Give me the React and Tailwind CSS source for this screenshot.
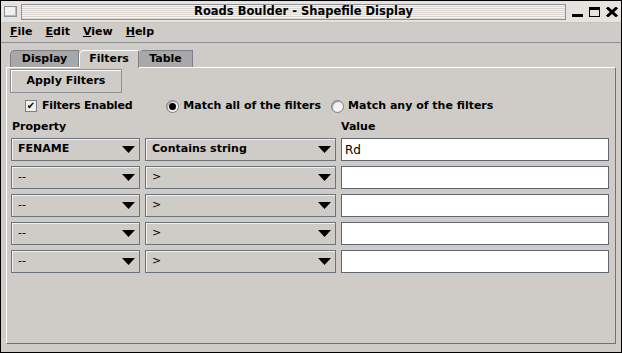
const font = "font-['DejaVu_Sans',sans-serif]";

function Combo({ label, bold, w }) {
  return (
    <div className={`${w} h-[23px] flex items-center justify-between border border-[#6b737d] shadow-[inset_1px_1px_0_#f2f1ee] bg-[#cfccc8] pl-[6px] pr-[4px]`}>
      <span className={`${bold ? "font-bold" : "font-normal"} text-[11px] text-black`}>{label}</span>
      <svg width="13" height="8" viewBox="0 0 13 8"><path d="M0 0 H13 L6.5 7 Z" fill="#000" /></svg>
    </div>
  );
}

function FilterRow({ prop, op, val, bold }) {
  return (
    <div className="flex gap-[5px]">
      <Combo label={prop} bold={bold} w="w-[129px]" />
      <Combo label={op} bold={bold} w="w-[191px]" />
      <div className="w-[268px] h-[23px] bg-white border border-[#5f6670] flex items-center px-[3px] text-[12px] text-black">
        {val}
      </div>
    </div>
  );
}

function Radio({ checked, label }) {
  return (
    <div className="flex items-center gap-[4px]">
      <div className="w-[13px] h-[13px] rounded-full border border-[#7b7f86] bg-[#f4f3f1] flex items-center justify-center shadow-[inset_1px_1px_0_#9aa0a6]">
        {checked && <div className="w-[7px] h-[7px] rounded-full bg-black" />}
      </div>
      <span className="font-bold text-[11px]">{label}</span>
    </div>
  );
}

export default function App() {
  const rows = [
    { prop: "FENAME", op: "Contains string", val: "Rd", bold: true },
    { prop: "--", op: ">", val: "" },
    { prop: "--", op: ">", val: "" },
    { prop: "--", op: ">", val: "" },
    { prop: "--", op: ">", val: "" },
  ];
  return (
    <div className={`${font} w-[622px] h-[353px] bg-[#cfccc8] border border-black flex flex-col text-black overflow-hidden`}>
      {/* title bar */}
      <div className="h-[22px] flex items-center bg-[#e6e3de] border-b border-[#c8c5c0] pl-[3px] pr-[3px]">
        <div className="w-[13px] h-[11px] border border-[#8d9198] bg-[#f1f0ee] shadow-[inset_-1px_-1px_0_#b5b8bc]" />
        <div className="ml-[4px] w-[545px] h-[16px] border border-[#8d9198] flex items-center justify-center bg-[repeating-linear-gradient(to_bottom,#f6f4f0_0px,#f6f4f0_1px,#d9d6d1_1px,#d9d6d1_2px)]">
          <span className="font-bold text-[11.5px] leading-none px-[2px] ml-[20px]">Roads Boulder - Shapefile Display</span>
        </div>
        <div className="ml-[6px] flex items-center gap-[6px]">
          <div className="w-[11px] h-[10px] flex items-end"><div className="w-full h-[3px] bg-black" /></div>
          <div className="w-[11px] h-[10px] border-[1.5px] border-black border-t-[3px]" />
          <svg width="12" height="10" viewBox="0 0 12 10"><path d="M1 0.5 L11 9.5 M11 0.5 L1 9.5" stroke="#000" strokeWidth="3" /></svg>
        </div>
      </div>
      {/* menu bar */}
      <div className="h-[21px] flex items-center gap-[13px] pl-[9px] text-[11px] font-bold border-b border-[#8a8f96] mt-[-1px]">
        <span><u>F</u>ile</span>
        <span><u>E</u>dit</span>
        <span><u>V</u>iew</span>
        <span><u>H</u>elp</span>
      </div>
      {/* tabs */}
      <div className="flex pl-[9px] mt-[6px] text-[11px] font-bold h-[18px] items-end">
        <div className="w-[69px] h-[17px] bg-[#a8a8a8] border border-[#7d8086] border-b-0 rounded-tl-[5px] flex items-center justify-center">Display</div>
        <div className="w-[60px] h-[18px] bg-[#cfccc8] border-l border-t border-white border-r border-r-[#7d8086] rounded-tl-[5px] flex items-center justify-center relative z-10 mb-[-1px]">Filters</div>
        <div className="w-[54px] h-[17px] bg-[#a8a8a8] border border-[#7d8086] border-b-0 border-l-0 rounded-tl-[5px] flex items-center justify-center">Table</div>
      </div>
      {/* panel */}
      <div className="mx-[5px] h-[277px] border-t border-l border-white border-r border-b border-r-[#6b737d] border-b-[#6b737d] pl-[3px] pr-[5px] pt-[1px] flex flex-col">
        <div className="w-[112px] h-[24px] border border-[#8a8f96] shadow-[inset_1px_1px_0_#fff] flex items-center justify-center text-[11px] font-bold">
          Apply Filters
        </div>
        <div className="flex items-center mt-[6px] h-[14px] text-[11px]">
          <div className="ml-[15px] flex items-center gap-[5px]">
            <div className="w-[12px] h-[12px] border border-[#7b7f86] bg-[#efeeec] flex items-center justify-center text-[10px] leading-none font-bold">✔</div>
            <span className="font-bold tracking-[-0.2px]">Filters Enabled</span>
          </div>
          <div className="ml-[34px]"><Radio checked label="Match all of the filters" /></div>
          <div className="ml-[10px]"><Radio label="Match any of the filters" /></div>
        </div>
        <div className="flex text-[11px] font-bold mt-[7px] h-[14px] items-center">
          <span className="w-[331px] pl-[2px]">Property</span>
          <span>Value</span>
        </div>
        <div className="flex flex-col gap-[5px] mt-[4px] pl-[1px]">
          {rows.map((r, i) => (
            <FilterRow key={i} {...r} />
          ))}
        </div>
      </div>
    </div>
  );
}
